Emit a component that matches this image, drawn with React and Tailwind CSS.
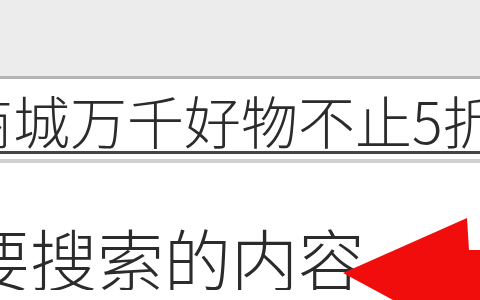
export default function App() {
  const cjk = { fontFamily: '"Noto Sans CJK SC", "Noto Sans", sans-serif' };
  return (
    <div className="relative w-[480px] h-[300px] overflow-hidden bg-white">
      <div className="h-[79px] bg-[#ececec] border-b-[3px] border-[#b4b4b4]" />
      <div className="h-[72px] overflow-hidden whitespace-nowrap pt-[12px]">
        <div className="ml-[-44px] text-[57px] font-light leading-none text-[#2b2b2b]" style={cjk}>
          商城万千好物不止5折
        </div>
      </div>
      <div className="h-[3px] bg-[#454545]" />
      <div className="h-[5px]" />
      <div className="h-[4px] bg-[#cfcfcf]" />
      <div className="overflow-hidden whitespace-nowrap pt-[60px]">
        <div className="ml-[-37px] text-[67px] font-light leading-none text-[#2b2b2b]" style={cjk}>
          要搜索的内容
        </div>
      </div>
      <svg className="absolute left-0 top-0" width="480" height="300" viewBox="0 0 480 300">
        <polygon points="343,273 467,218 469,250 480,250 480,310 469,310 467,340" fill="#f20d0d" />
      </svg>
    </div>
  );
}
